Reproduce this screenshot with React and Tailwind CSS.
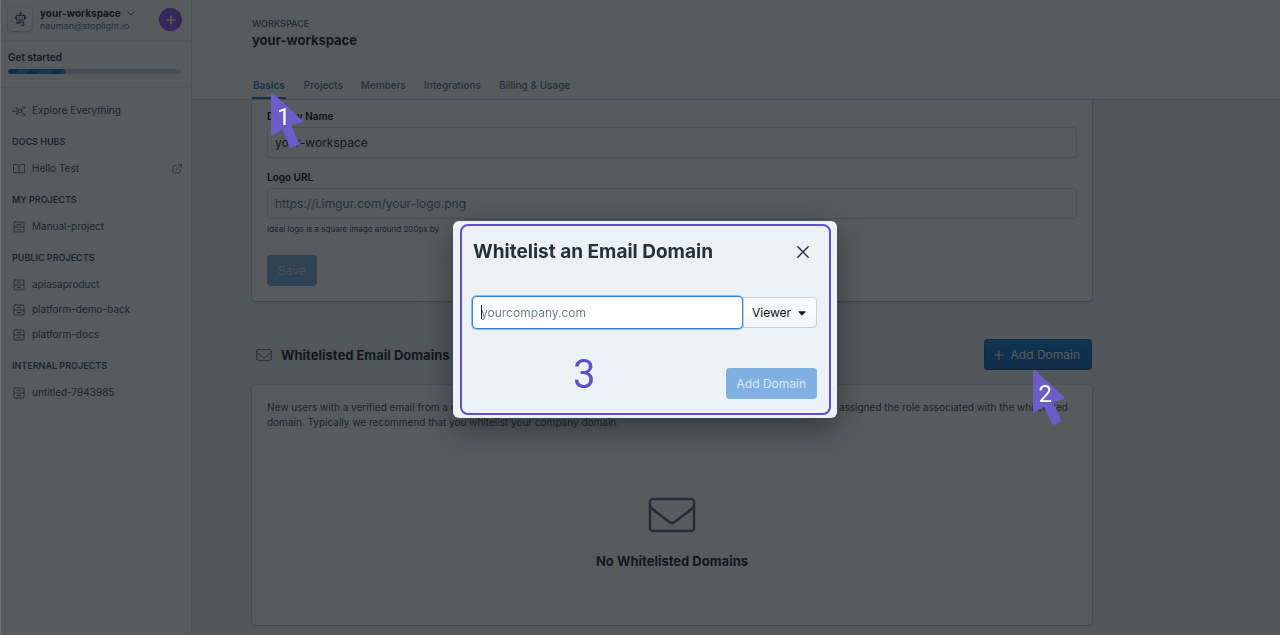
import React from "react";

const iconProps = {
  fill: "none",
  stroke: "currentColor",
  strokeLinecap: "round",
  strokeLinejoin: "round",
  "aria-hidden": true,
};

function RobotIcon() {
  return (
    <svg {...iconProps} viewBox="0 0 12 16" strokeWidth="1.1" className="h-[15px] w-[11px]">
      <path d="M6 1v2.5M2.5 3.5h7a1 1 0 0 1 1 1v3a1 1 0 0 1-1 1h-7a1 1 0 0 1-1-1v-3a1 1 0 0 1 1-1zM.6 5v2M11.4 5v2" />
      <path d="M4.2 5.6v.8M7.8 5.6v.8" />
      <path d="M5.500 12H2V10.700h7.600v3.600H6" />
      <circle cx="6" cy="1.2" r=".5" />
    </svg>
  );
}

function GraphIcon() {
  return (
    <svg {...iconProps} viewBox="0 0 14 12" strokeWidth="0.9" className="h-3 w-3.5">
      <circle cx="1.300" cy="6.200" r=".6" fill="currentColor" />
      <circle cx="4.400" cy="3.200" r=".5" fill="currentColor" />
      <circle cx="8" cy="6" r="1.700" />
      <circle cx="11.800" cy="2.400" r="1" />
      <circle cx="11.800" cy="9.800" r="1" />
      <circle cx="4.600" cy="9" r=".5" fill="currentColor" />
      <path d="M2.400 6.200h3.800M5 3.600l1.700 1.300M9.200 4.800l1.800-1.600M9.200 7.200l1.800 1.800M6.800 7.300L5 8.700" />
    </svg>
  );
}

function BookIcon() {
  return (
    <svg {...iconProps} viewBox="0 0 14 12" strokeWidth="1" className="h-3 w-3.5">
      <path d="M7 2.600C6.600 1.800 5.900 1.500 5 1.500H1.500v8H5c.9 0 1.600.3 2 1 .4-.7 1.100-1 2-1h3.500v-8H9c-.9 0-1.600.3-2 1.100zM7 2.600v7.800" />
    </svg>
  );
}

function DrawerIcon() {
  return (
    <svg {...iconProps} viewBox="0 0 14 12" strokeWidth="1" className="h-3 w-3.5">
      <rect x="2" y="1" width="10" height="10" rx="1" />
      <path d="M2 6h10M5.300 4v-.6h3.400V4M5.300 9v-.6h3.400V9" />
    </svg>
  );
}

function ExternalIcon() {
  return (
    <svg {...iconProps} viewBox="0 0 10 10" strokeWidth="0.9" className="size-2.5 text-[#5c7080]">
      <path d="M4.500 1.800H2a1 1 0 0 0-1 1V8a1 1 0 0 0 1 1h5.200a1 1 0 0 0 1-1V5.500M3.800 6.200L9 1M6.200.8H9.200V3.800" />
    </svg>
  );
}

function MailIcon({ className, strokeWidth }) {
  return (
    <svg {...iconProps} viewBox="0 0 48 36" strokeWidth={strokeWidth} className={className}>
      <rect x="2" y="2" width="44" height="32" rx="3" />
      <path d="M2.500 10.500L20.500 24.500Q24 27.200 27.500 24.500L45.500 10.500" />
    </svg>
  );
}

function Pointer({ label, className }) {
  return (
    <span className={"pointer-events-none absolute z-20 block h-[55px] w-8 " + className}>
      <svg viewBox="0 0 32 55" className="absolute inset-0 h-full w-full" aria-hidden="true">
        <path
          d="M1.500 1.500L30 28L18 31.300L26.700 50.700L20.300 53.500L11.700 34.500L1.500 41Z"
          fill="#6c5cc7"
          stroke="#6c5cc7"
          strokeWidth="3"
          strokeLinejoin="round"
        />
      </svg>
      <span className="absolute top-3 left-1.5 font-[Roboto,sans-serif] text-2xl leading-6 font-normal text-white">
        {label}
      </span>
    </span>
  );
}

const groups = [
  { title: "DOCS HUBS", items: ["Hello Test"], hub: true },
  { title: "MY PROJECTS", items: ["Manual-project"] },
  { title: "PUBLIC PROJECTS", items: ["apiasaproduct", "platform-demo-back", "platform-docs"] },
  { title: "INTERNAL PROJECTS", items: ["untitled-7943985"] },
];

const tabs = ["Basics", "Projects", "Members", "Integrations", "Billing & Usage"];

function NavItem({ icon, children, trailing }) {
  return (
    <a href="#" className="flex h-[25px] items-center gap-1.5 pr-[9px] pl-3 text-[10px] text-[#394b59]">
      <span className="text-[#5c7080]">{icon}</span>
      <span className="flex-1">{children}</span>
      {trailing}
    </a>
  );
}

function Sidebar() {
  return (
    <aside className="w-48 shrink-0 border-r border-[#dbe3e9] bg-white">
      <div className="flex h-[41px] items-start border-b border-[#e6ecf0] pr-[9px] pl-2">
        <div className="mt-[7px] flex size-6 items-center justify-center rounded-sm bg-white text-[#394b59] shadow-[0_0_0_1px_rgba(16,22,26,0.06),0_1px_2px_rgba(16,22,26,0.25)]">
          <RobotIcon />
        </div>
        <div className="ml-2 flex-1 pt-[7px]">
          <button type="button" className="flex items-center gap-1.5 text-[10px] leading-[13px] font-bold text-[#182026]">
            your-workspace
            <svg {...iconProps} viewBox="0 0 8 5" className="h-[5px] w-2 text-[#394b59]">
              <path d="M.8.800L4 4.200L7.200.8" />
            </svg>
          </button>
          <p className="text-[9px] leading-3 text-[#5c7080]">nauman@stoplight.io</p>
        </div>
        <button type="button" aria-label="Create" className="mt-2 flex size-[23px] items-center justify-center rounded-full bg-[#8f50f0] text-white">
          <svg {...iconProps} viewBox="0 0 10 10" strokeWidth="1.600" className="size-2.5">
            <path d="M5 1v8M1 5h8" />
          </svg>
        </button>
      </div>
      <div className="h-[47px] border-b border-[#edf1f4] pt-2.5 pr-2.5 pl-2">
        <p className="text-[10px] leading-3 font-semibold text-[#182026]">Get started</p>
        <div className="mt-1.5 h-[5px] overflow-hidden rounded-full bg-[#ced6dc]">
          <div className="h-full w-1/3 rounded-full bg-[repeating-linear-gradient(135deg,#1269c4_0_8px,#3583d6_8px_16px)]" />
        </div>
      </div>
      <nav aria-label="Workspace" className="pt-2.5">
        <NavItem icon={<GraphIcon />}>Explore Everything</NavItem>
        {groups.map((g) => (
          <section key={g.title}>
            <h2 className="px-3 pt-3 pb-2 text-[9px] leading-[13px] font-semibold text-[#394b59]">{g.title}</h2>
            {g.items.map((item) => (
              <NavItem
                key={item}
                icon={g.hub ? <BookIcon /> : <DrawerIcon />}
                trailing={g.hub ? <ExternalIcon /> : null}
              >
                {item}
              </NavItem>
            ))}
          </section>
        ))}
      </nav>
    </aside>
  );
}

function Header() {
  return (
    <header className="border-b border-[#ced9e0] bg-white pr-8 pl-[60px]">
      <div className="pt-[18px]">
        <p className="text-[9px] leading-3 font-semibold text-[#5c7080]">WORKSPACE</p>
        <h1 className="text-[13px] leading-5 font-bold text-[#182026]">your-workspace</h1>
      </div>
      <nav aria-label="Workspace settings" className="mt-[25px] flex gap-[18px]">
        {tabs.map((t, i) => (
          <a
            key={t}
            href="#"
            className={
              i === 0
                ? "relative h-6 border-b-2 border-[#137cbd] px-px pt-0.5 text-[10px] leading-4 font-semibold text-[#137cbd]"
                : "h-6 pt-0.5 text-[10px] leading-4 font-medium text-[#5c7080]"
            }
          >
            {t}
            {i === 0 && <Pointer label="1" className="top-[18px] left-[19px]" />}
          </a>
        ))}
      </nav>
    </header>
  );
}

const card = "bg-white shadow-[0_0_0_1px_rgba(16,22,26,0.08),0_1px_2px_rgba(16,22,26,0.3)]";
const field =
  "block h-[31px] w-full rounded-sm bg-white px-2 text-xs text-[#182026] shadow-[inset_0_0_0_1px_rgba(16,22,26,0.15)] outline-none placeholder:text-[#5c7080]";

function Content() {
  return (
    <main className="max-w-[900px] flex-1 pb-2.5 pl-[60px]">
      <form className={"rounded-b-sm px-[15px] pt-2.5 pb-[15px] " + card}>
        <label htmlFor="display-name" className="block text-[10px] leading-3 font-semibold text-black">
          Display Name
        </label>
        <input id="display-name" defaultValue="your-workspace" className={"mt-[5px] " + field} />
        <label htmlFor="logo-url" className="mt-3 block text-[10px] leading-[14px] font-semibold text-black">
          Logo URL
        </label>
        <input id="logo-url" placeholder="https://i.imgur.com/your-logo.png" className={"mt-1 " + field} />
        <p className="mt-1 text-[8px] leading-3 text-[#394b59]">Ideal logo is a square image around 200px by</p>
        <button type="button" className="mt-5 h-[31px] rounded-sm bg-[#79aee0] px-[11px] text-xs text-white/60">
          Save
        </button>
      </form>

      <div className="mt-[38px] flex items-center pl-1">
        <MailIcon className="h-3 w-4 text-[#5c7080]" strokeWidth="3" />
        <h2 className="ml-[9px] flex-1 text-[13px] leading-5 font-bold text-[#182026]">Whitelisted Email Domains</h2>
        <div className="relative">
          <button
            type="button"
            className="flex h-[31px] items-center gap-[7px] rounded-sm bg-linear-to-b from-[#137cd0] to-[#0d62b5] pr-3 pl-2.5 text-xs text-white shadow-[inset_0_0_0_1px_rgba(16,22,26,0.2)]"
          >
            <svg {...iconProps} viewBox="0 0 10 10" className="size-2.5">
              <path d="M5 .5v9M.5 5h9" />
            </svg>
            Add Domain
          </button>
          <Pointer label="2" className="top-[31px] left-[49px]" />
        </div>
      </div>

      <section className={"mt-[15px] rounded-sm px-[15px] pt-[15px] pb-[54px] " + card}>
        <p className="text-[10px] leading-[15px] text-[#394b59]">
          New users with a verified email from a whitelisted domain will be able to automatically join your business
          workspace and assigned the role associated with the whitelisted domain. Typically we recommend that you
          whitelist your company domain.
        </p>
        <div className="mt-[67px] flex flex-col items-center">
          <MailIcon className="h-9 w-12 text-[#5c6080]" strokeWidth="2.500" />
          <h3 className="mt-[18px] text-[13px] leading-5 font-bold text-[#182026]">No Whitelisted Domains</h3>
        </div>
      </section>
    </main>
  );
}

function WhitelistDialog() {
  return (
    <div className="fixed inset-0 z-10 flex items-center justify-center border-l border-white/15 bg-[#10161a]/70 pt-1 pl-[9px]">
      <div
        role="dialog"
        aria-modal="true"
        aria-labelledby="dialog-title"
        className="w-96 rounded-md bg-[#ebf1f5] py-[3px] pr-1.5 pl-[7px] shadow-[0_10px_30px_rgba(16,22,26,0.5)]"
      >
        <div className="relative rounded-lg border-2 border-[#6350c4] pt-3 pr-3 pb-3.5 pl-[11px]">
          <div className="flex items-center justify-between">
            <h2 id="dialog-title" className="text-[19px] leading-7 font-bold text-[#23313c]">
              Whitelist an Email Domain
            </h2>
            <button type="button" aria-label="Close" className="p-2 text-[#23313c]">
              <svg {...iconProps} viewBox="0 0 12 12" strokeWidth="1.400" className="size-3">
                <path d="M.8.800L11.200 11.200M11.200.8L.8 11.200" />
              </svg>
            </button>
          </div>
          <div className="mt-[31px] flex">
            <div className="relative min-w-0 flex-1">
              <input
                autoFocus
                aria-label="Email domain"
                placeholder="yourcompany.com"
                className="h-[31px] w-full rounded-sm bg-white px-2 text-xs text-[#182026] caret-transparent shadow-[0_0_0_1px_#2f86dc,0_0_0_2px_rgba(47,134,220,0.5)] outline-none placeholder:text-[#717f8a]"
              />
              <span className="pointer-events-none absolute top-2 left-2 h-3.5 w-px bg-[#182026]" />
            </div>
            <div className="relative ml-px w-[74px]">
              <select
                aria-label="Role"
                className="h-[31px] w-full appearance-none rounded-r-sm bg-linear-to-b from-[#fdfdfe] to-[#f2f5f7] pl-[9px] text-xs text-[#10161a] shadow-[inset_0_0_0_1px_rgba(16,22,26,0.18)]"
              >
                <option>Viewer</option>
                <option>Editor</option>
              </select>
              <svg viewBox="0 0 8 5" className="pointer-events-none absolute top-[14px] right-[11px] h-[5px] w-2 text-[#10161a]" aria-hidden="true">
                <path d="M.8.300h6.400q.8 0 .3.600L4.500 4.300q-.5.500-1 0L.5.900Q0 .3.800.3z" fill="currentColor" />
              </svg>
            </div>
          </div>
          <div className="mt-10 flex justify-end">
            <button type="button" className="h-[31px] rounded-sm bg-[#80afe1] px-[11px] text-xs text-[#dce8f5]">
              Add Domain
            </button>
          </div>
          <span className="absolute bottom-[18px] left-[111px] font-[Roboto,sans-serif] text-[40px] leading-10 font-normal text-[#6350c4]">
            3
          </span>
        </div>
      </div>
    </div>
  );
}

export default function App() {
  return (
    <div className="flex min-h-screen bg-white font-['Inter',sans-serif]">
      <Sidebar />
      <div className="flex min-w-0 flex-1 flex-col bg-[#ebf1f5]">
        <Header />
        <Content />
      </div>
      <WhitelistDialog />
    </div>
  );
}
